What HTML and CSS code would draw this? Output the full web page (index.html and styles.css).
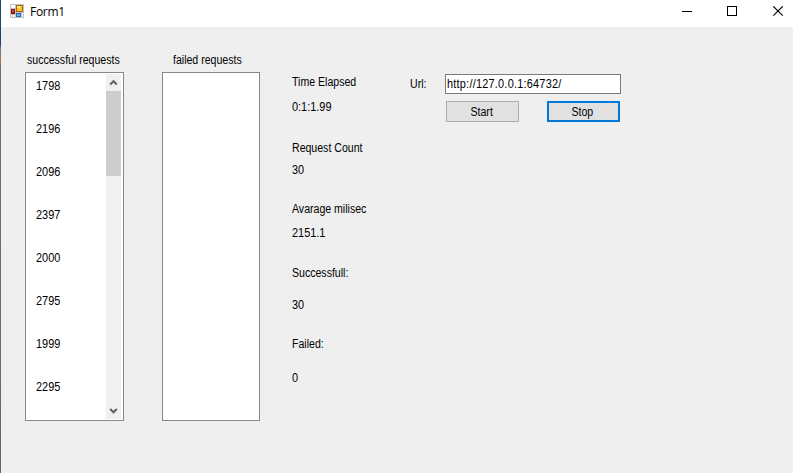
FILE: index.html
```
<!DOCTYPE html>
<html lang="en">
<head>
<meta charset="utf-8">
<title>Form1</title>
<link rel="stylesheet" href="styles.css">
</head>
<body>
<div class="edge"></div>
<div class="window">
  <header class="titlebar">
    <svg class="app-icon" width="14" height="14" viewBox="0 0 14 14" shape-rendering="crispEdges">
      <path fill="#c3c3c3" d="M0 0h14v14H0z"/>
      <path fill="#fff" d="M1 1h4v3H1zM1 11h1v2H1zM3 11h2v2H3zM12 9h1v4h-1z"/>
      <path fill="#a86500" d="M6 1h7v7H6z"/><path fill="#ffc72b" d="M7 2h5v5H7z"/><path fill="#ffe58a" d="M7 2h3v2H7z"/>
      <path fill="#8b1710" d="M1 5h4v5H1z"/><path fill="#d94b36" d="M2 6h2v2H2z"/>
      <path fill="#2b66bd" d="M6 9h5v4H6z"/><path fill="#6eadf5" d="M7 10h3v2H7z"/>
    </svg>
    <h1>Form1</h1>
    <svg class="controls" width="102" height="12" viewBox="0 0 102 12">
      <path d="M0 5.5h10" stroke="#000"/>
      <rect x="45.5" y=".5" width="9" height="9" fill="none" stroke="#000"/>
      <path d="M91.3 .3l9.4 9.4M100.700 .3l-9.4 9.4" stroke="#000" stroke-width="1.1"/>
    </svg>
  </header>
  <main class="client">
    <section class="list success">
      <h2><span>successful requests</span></h2>
      <div class="listbox">
        <ul>
          <li><span>1798</span></li><li><span>2196</span></li><li><span>2096</span></li><li><span>2397</span></li>
          <li><span>2000</span></li><li><span>2795</span></li><li><span>1999</span></li><li><span>2295</span></li>
        </ul>
        <div class="scrollbar">
          <svg width="15" height="17" viewBox="0 0 15 17"><path d="M4.200 10.500l3.300-3.300 3.300 3.300" fill="none" stroke="#606060" stroke-width="2"/></svg>
          <div class="thumb"></div>
          <svg class="down" width="15" height="17" viewBox="0 0 15 17"><path d="M4.200 7l3.300 3.300 3.300-3.300" fill="none" stroke="#606060" stroke-width="2"/></svg>
        </div>
      </div>
    </section>
    <section class="list failed">
      <h2><span>failed requests</span></h2>
      <div class="listbox"></div>
    </section>
    <dl class="stats">
      <dt><span>Time Elapsed</span></dt><dd class="elapsed"><span>0:1:1.99</span></dd>
      <dt><span>Request Count</span></dt><dd class="count"><span>30</span></dd>
      <dt><span>Avarage milisec</span></dt><dd class="average"><span>2151.1</span></dd>
      <dt><span>Successfull:</span></dt><dd class="ok"><span>30</span></dd>
      <dt><span>Failed:</span></dt><dd class="bad"><span>0</span></dd>
    </dl>
    <section class="request">
      <div class="url-row">
        <div class="url-label"><span>Url:</span></div>
        <div class="field"><span>http://127.0.0.1:64732/</span></div>
      </div>
      <div class="buttons">
        <button><span>Start</span></button>
        <button class="focused"><span>Stop</span></button>
      </div>
    </section>
  </main>
</div>
</body>
</html>
```
FILE: styles.css
```
* { box-sizing: border-box; }
body {
  margin: 0;
  width: 793px;
  height: 473px;
  overflow: hidden;
  display: flex;
  background: #efefef;
  color: #000;
  font: 12px/15px "Liberation Sans", sans-serif;
}
h1, h2, ul, dl, dt, dd { margin: 0; padding: 0; font: inherit; }
span {
  display: inline-block;
  white-space: nowrap;
  transform: scaleX(.91);
  transform-origin: left center;
}
h2 span, dt span { transform: scaleX(.88); }
.edge {
  width: 1px;
  background: linear-gradient(#253f7b 0 45px, #8d7668 48px 58px, #b27a40 61px, #6d6d6d 68px 240px, #686868 100%);
}
.window { flex: 1; }
.titlebar {
  height: 27px;
  display: flex;
  align-items: flex-start;
  background: #fff;
}
.app-icon { margin: 4px 0 0 9px; }
.titlebar h1 {
  margin: 4px 0 0 6px;
  font: 12px/16px "Open Sans", sans-serif;
  letter-spacing: -.3px;
}
.controls { margin: 6px 9px 0 auto; }
.client { display: flex; height: 446px; align-items: flex-start; }
.list h2 { height: 19px; }
.success { margin: 26px 0 0 24px; width: 99px; }
.failed { margin: 26px 0 0 38px; width: 98px; }
.success h2 { padding-left: 1.5px; }
.failed h2 { padding-left: 11px; }
.listbox {
  height: 349px;
  display: flex;
  justify-content: space-between;
  border: 1px solid #828790;
  background: #fff;
}
.listbox ul { list-style: none; padding: 6px 0 0 10px; }
.listbox li { height: 43px; }
.scrollbar {
  width: 15px;
  margin: 1px 2px 1px 0;
  display: flex;
  flex-direction: column;
  background: #f0f0f0;
}
.thumb { height: 85px; background: #cdcdcd; }
.down { margin-top: auto; }
.stats { width: 100px; margin: 48px 0 0 32px; }
.elapsed { margin: 10px 0 26px; }
.count { margin: 7px 0 24px; }
.average { margin: 9px 0 25px; }
.ok { margin: 17px 0 24px; }
.bad { margin-top: 19px; }
.request { margin: 47px 0 0 18px; }
.url-row { display: flex; }
.url-label { width: 35px; margin-top: 3px; }
.url-label span { transform: scaleX(.88); }
.field {
  width: 176px;
  height: 20px;
  padding: 2px 1px;
  border: 1px solid #7a7a7a;
  background: #fff;
}
.field span { letter-spacing: .25px; }
.buttons { display: flex; gap: 28px; margin: 7px 0 0 36px; }
button {
  width: 73px;
  height: 21px;
  padding: 2px 2px 0 0;
  border: 1px solid #adadad;
  background: #e1e1e1;
  color: #000;
  font: inherit;
}
button span { transform: scaleX(.88); transform-origin: center; }
.focused { border: 2px solid #0078d7; }
```
